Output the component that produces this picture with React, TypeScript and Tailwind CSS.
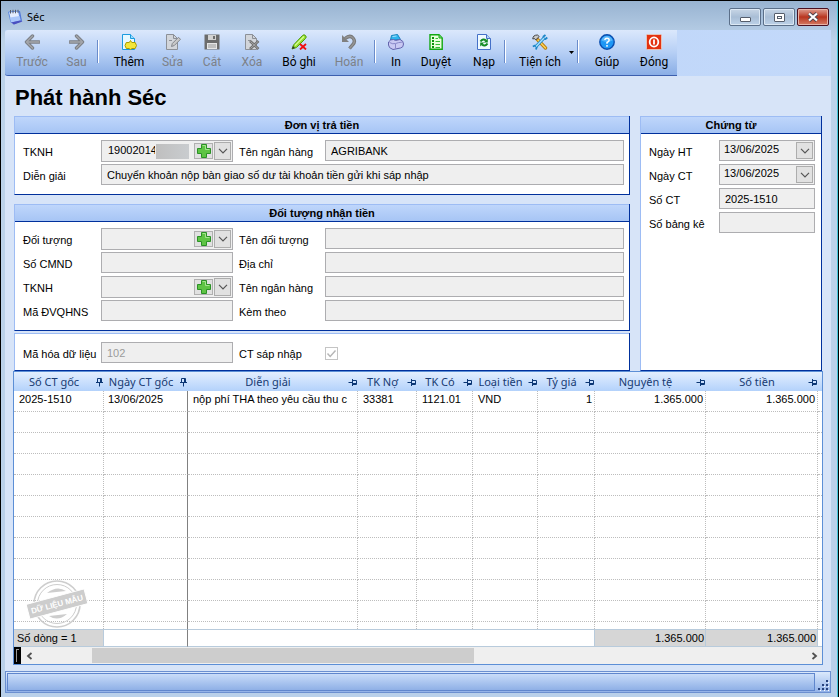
import { useId } from 'react';
import type { ReactNode } from 'react';

interface ToolItem {
  label: string;
  icon: ReactNode;
  className: string;
  disabled?: boolean;
}

interface PanelProps {
  title?: string;
  className?: string;
  children: ReactNode;
}

interface FieldProps {
  label: string;
  value?: string;
  className?: string;
  labelClassName?: string;
}

const ArrowIcon = ({ flip }: { flip?: boolean }) => (
  <svg viewBox="0 0 16 16" className={flip ? 'size-4 -scale-x-100' : 'size-4'}>
    <path d="M8.5 2 2.5 8l6 6M3 8h12" fill="none" stroke="#7b7f86" strokeWidth="3.4" strokeLinejoin="round" strokeLinecap="round" />
    <path d="M8.500 2 2.500 8l6 6M3 8h12" fill="none" stroke="#a4a6aa" strokeWidth="1.400" strokeLinejoin="round" strokeLinecap="round" />
  </svg>
);

const AddIcon = () => (
  <svg viewBox="0 0 16 16" className="size-4">
    <path d="M1.5.5h8l4 4v11h-12z" fill="#e6f8ff" stroke="#1a9be0" />
    <path d="M9.5.5v4h4" fill="#9fdcfb" stroke="#1a9be0" />
    <path d="m9.500 6.500 1.300 2h3.400l1.300 3-1.300 3h-3.400l-1.300 1.200-1.300-1.200H5.300l-1.300-3 1.300-3h3z" fill="#f3e63a" stroke="#a89b00" />
  </svg>
);

const EditIcon = () => (
  <svg viewBox="0 0 16 16" className="size-4">
    <path d="M1.5.5h7l4 4v11h-11z" fill="#d2d5da" stroke="#8c9097" />
    <path d="M8.5.5v4h4M4 6.5h3" fill="none" stroke="#8c9097" />
    <path d="m6.500 12.500.8-3L13.500 3.300l2 2-6.200 6.200z" fill="#c8c8c8" stroke="#83868c" />
  </svg>
);

const SaveIcon = () => (
  <svg viewBox="0 0 16 16" className="size-4">
    <path d="M.5.5h15v15H.5z" fill="#6c6c6c" />
    <path d="M4 1h8v5H4z" fill="#d2d2d2" />
    <path d="M9 2h2v3H9z" fill="#6c6c6c" />
    <path d="M3 9h10v6H3z" fill="#e6e6e6" />
    <path d="M4 11h8M4 13h8" stroke="#9a9a9a" />
  </svg>
);

const DeleteIcon = () => (
  <svg viewBox="0 0 16 16" className="size-4">
    <path d="M1.5.5h7l4 4v11h-11z" fill="#d2d5da" stroke="#8c9097" />
    <path d="M8.5.5v4h4M4 6.5h3" fill="none" stroke="#8c9097" />
    <path d="m6 7 8.500 8M14.500 7 6 15" stroke="#6f6f6f" strokeWidth="2.600" />
    <path d="m6.500 7.500 7.500 7M14 7.500l-7.500 7" stroke="#b5b5b5" strokeWidth=".8" />
  </svg>
);

const UnpostIcon = () => (
  <svg viewBox="0 0 16 16" className="size-4">
    <path d="M1 15 2.500 11 11.500 1.500Q13 0 14.500 1.500T14.500 4.500L5.500 13.500z" fill="#93e02c" stroke="#4f9a0c" />
    <path d="M4 11.500 13 2.500" stroke="#d8fb9a" strokeWidth="1.200" />
    <path d="M1 15l1-3 2 2z" fill="#333333" />
    <path d="m9 10 6 5.500M15 10l-6 5.500" stroke="#f01010" strokeWidth="1.800" />
  </svg>
);

const UndoIcon = () => (
  <svg viewBox="0 0 16 16" className="size-4">
    <path d="M4 4.500Q9 .5 12 4t-.5 7L8.500 14.500" fill="none" stroke="#757575" strokeWidth="3.400" />
    <path d="M4 4.500Q9 .5 12 4t-.5 7L8.500 14.500" fill="none" stroke="#949494" strokeWidth="1.600" />
    <path d="M1 1v7h7z" fill="#808080" />
  </svg>
);

const PrintIcon = () => (
  <svg viewBox="0 0 16 16" className="size-4">
    <path d="M2.500 6 3.500 1.500l6-1L12.500 5.500z" fill="#2fb4ee" stroke="#1583bd" />
    <path d="M4.500 2.500l4-.5" stroke="#a8e2fb" />
    <path d="M.5 8q2-3 5-2.500l2 1L12 5.500q3.500 1 3.500 4.500t-3 4L5 15.500Q.5 14 .5 11z" fill="#c9c9f3" stroke="#6262ac" />
    <path d="M1.500 8.500Q5 10.500 7.500 9.500T14.500 8M7.500 10v4.500" fill="none" stroke="#8888c8" />
  </svg>
);

const ReviewIcon = () => (
  <svg viewBox="0 0 16 16" className="size-4">
    <path d="M2 .8h9l3.200 3.200v11.200H2z" fill="#eaffdc" stroke="#12a812" strokeWidth="1.400" />
    <path d="M11 1v3h3" fill="#8be08b" stroke="#12a812" />
    <path d="M4 4h2M4 7h2M4 10h2M4 13h2" stroke="#0a930a" strokeWidth="2" />
    <path d="M7.500 4.500H10M7.500 7.500H12M7.500 10.500H12M7.500 13.500H12" stroke="#35bb35" />
  </svg>
);

const ReloadIcon = () => (
  <svg viewBox="0 0 16 16" className="size-4">
    <path d="M1.500.5h9l4 4v11h-13z" fill="#effaff" stroke="#4470c8" />
    <path d="M10.500.5v4h4" fill="#b6d2f7" stroke="#4470c8" />
    <path d="M4.500 7.500Q7 4 10 6.500M11.500 9.500Q9 13 6 10.500" fill="none" stroke="#118a22" strokeWidth="2" />
    <path d="M11.800 4.500v4h-4zM4.200 12.500v-4h4z" fill="#118a22" />
  </svg>
);

const ToolsIcon = () => (
  <svg viewBox="0 0 16 16" className="size-4">
    <path d="m5 5 8.500 9" stroke="#b77d0c" strokeWidth="3.400" strokeLinecap="round" />
    <path d="m6 6 7.500 8" stroke="#ffd257" strokeWidth="1.600" strokeLinecap="round" />
    <path d="M.8 5Q.8 1 5.500 1l1.700 1.500-3.500 3.500L2.500 4.500z" fill="#c9c9c9" stroke="#454545" />
    <path d="M12 4 4 12.500" stroke="#1b86c8" strokeWidth="3.200" />
    <path d="M13.500 1 11.500 2.500v2l2 .5L15.300 3.500M.8 12.500 3 11.500l1.700 1.500-.7 2.500" fill="none" stroke="#1b86c8" strokeWidth="1.800" />
    <path d="M12 4 4 12.500" stroke="#a9e1fb" strokeWidth="1.400" />
  </svg>
);

const HelpIcon = () => (
  <svg viewBox="0 0 16 16" className="size-4">
    <circle cx="8" cy="8" r="7.200" fill="#1e97f5" stroke="#0b4fb0" strokeWidth="1.400" />
    <path d="M2.500 6.500a5.600 5.600 0 0 1 11 0q-5.500 2.500-11 0" fill="#7fccff" opacity=".6" />
    <path d="M5.800 6Q6 4.200 8 4.200t2.200 1.700Q10.200 7.200 8 8.500v1.200M8 11v1.800" fill="none" stroke="#ffffff" strokeWidth="1.500" />
  </svg>
);

const CloseIcon = () => (
  <svg viewBox="0 0 16 16" className="size-4">
    <rect x=".5" y=".5" width="15" height="15" rx="1" fill="#e33210" stroke="#e8c0b4" />
    <ellipse cx="8" cy="8" rx="4.300" ry="4.600" fill="none" stroke="#ffffff" strokeWidth="1.800" />
    <path d="M8 5.500v5" stroke="#ffffff" strokeWidth="1.800" />
  </svg>
);

const ChevronIcon = () => (
  <svg viewBox="0 0 10 6" className="h-1.5 w-2.5">
    <path d="m1 .8 4 4 4-4" fill="none" stroke="#555555" strokeWidth="1.200" />
  </svg>
);

const PinIcon = ({ upright }: { upright?: boolean }) => (
  <svg viewBox="0 0 10 10" className={upright ? 'size-2.5 shrink-0' : 'size-2.5 shrink-0 rotate-90'}>
    <path d="M2 5.500h7M3.500 5V1.500h4V5M6.500 1v4M5.500 6v3.500" fill="none" stroke="#0b3674" />
  </svg>
);

const tools: (ToolItem | 'separator')[] = [
  { label: 'Trước', icon: <ArrowIcon />, className: 'w-12', disabled: true },
  { label: 'Sau', icon: <ArrowIcon flip />, className: 'w-[41px]', disabled: true },
  'separator',
  { label: 'Thêm', icon: <AddIcon />, className: 'ml-2 w-[44px]' },
  { label: 'Sửa', icon: <EditIcon />, className: 'w-[43px]', disabled: true },
  { label: 'Cắt', icon: <SaveIcon />, className: 'w-9', disabled: true },
  { label: 'Xóa', icon: <DeleteIcon />, className: 'w-11', disabled: true },
  { label: 'Bỏ ghi', icon: <UnpostIcon />, className: 'w-[50px]' },
  { label: 'Hoãn', icon: <UndoIcon />, className: 'w-[50px]', disabled: true },
  'separator',
  { label: 'In', icon: <PrintIcon />, className: 'ml-2 w-6' },
  { label: 'Duyệt', icon: <ReviewIcon />, className: 'w-14' },
  { label: 'Nạp', icon: <ReloadIcon />, className: 'w-10' },
  'separator',
  { label: 'Tiện ích', icon: <ToolsIcon />, className: 'ml-2 w-[52px]' },
];

const helpTools: (ToolItem | 'separator')[] = [
  'separator',
  { label: 'Giúp', icon: <HelpIcon />, className: 'ml-1 w-12' },
  { label: 'Đóng', icon: <CloseIcon />, className: 'w-[46px]' },
];

const columns = [
  { title: 'Số CT gốc', width: 'w-[90px]', upright: true },
  { title: 'Ngày CT gốc', width: 'w-[84px]', upright: true },
  { title: 'Diễn giải', width: '' },
  { title: 'TK Nợ', width: 'w-[59px]' },
  { title: 'TK Có', width: 'w-[56px]' },
  { title: 'Loại tiền', width: 'w-[65px]' },
  { title: 'Tỷ giá', width: 'w-[57px]' },
  { title: 'Nguyên tệ', width: 'w-[111px]' },
  { title: 'Số tiền', width: 'w-[112px]' },
];

const record = ['2025-1510', '13/06/2025', 'nộp phí THA theo yêu cầu thu c', '33381', '1121.01', 'VND', '1', '1.365.000', '1.365.000'];
const emptyRows = Array.from({ length: 10 }, (_, i) => i);

const boxStyle = 'w-full min-w-0 border border-[#adadb0] bg-[#efefef]';

function ToolButtons({ items }: { items: (ToolItem | 'separator')[] }) {
  return (
    <>
      {items.map((item, i) =>
        item === 'separator' ? (
          <div key={i} className="mt-2.5 h-[23px] w-0.5 border-l border-r border-l-[#6a8ccb] border-r-white" />
        ) : (
          <button
            key={item.label}
            disabled={item.disabled}
            className={`${item.className} flex flex-col items-center gap-1 whitespace-nowrap pt-1 leading-4 disabled:text-[#7d8188]`}
          >
            {item.icon}
            {item.label}
          </button>
        ),
      )}
    </>
  );
}

function Panel({ title, className = '', children }: PanelProps) {
  return (
    <section className={`border-b border-l border-r border-b-[#00309c] border-l-[#9dbcf4] border-r-[#00309c] bg-white ${className}`}>
      {title ? (
        <h2 className="h-[18px] border-b border-t border-b-[#00309c] border-t-[#9dbcf4] bg-linear-to-b from-[#bfd6fb] to-[#a7c5f5] text-center font-bold leading-4">
          {title}
        </h2>
      ) : (
        <div className="h-px bg-[#9dbcf4]" />
      )}
      {children}
    </section>
  );
}

function TextField({ label, value = '', className = '', labelClassName = '' }: FieldProps) {
  const id = useId();
  return (
    <>
      <label htmlFor={id} className={`whitespace-nowrap pt-1 leading-4 ${labelClassName}`}>{label}</label>
      <div className={className}>
        <input id={id} readOnly value={value} className={`${boxStyle} block h-[21px] px-[5px] outline-none`} />
      </div>
    </>
  );
}

function SelectField({ label, value = '', addable, masked }: FieldProps & { addable?: boolean; masked?: boolean }) {
  const id = useId();
  return (
    <>
      <label htmlFor={id} className="whitespace-nowrap pt-1 leading-4">{label}</label>
      <div className={`${boxStyle} flex items-center gap-px pr-px ${addable ? 'h-[22px] pl-1.5' : 'h-[21px] pl-1'}`}>
        <select id={id} defaultValue={value} className="min-w-0 flex-1 appearance-none bg-transparent pb-0.5 outline-none">
          <option>{value}</option>
        </select>
        {masked && <span className="mr-1 h-[15px] w-[33px] bg-linear-to-r from-[#bfbfbf] to-[#c9cccf]" />}
        {addable && (
          <button aria-label={`Thêm ${label}`} className="flex h-4 w-[19px] items-center justify-center border border-[#b0b0b0] bg-[#e1e1e1]">
            <svg viewBox="0 0 14 14" className="size-3.5 shrink-0">
              <path d="M4.500.5h5v4h4v5h-4v4h-5v-4h-4v-5h4z" fill="#5ec444" stroke="#2b9126" />
              <path d="M5.500 1.500h3v4h4" fill="none" stroke="#a5e58e" />
            </svg>
          </button>
        )}
        <span className={`flex w-[17px] shrink-0 items-center justify-center border border-[#adadad] bg-[#e1e1e1] ${addable ? 'h-[18px]' : 'h-[17px]'}`}>
          <ChevronIcon />
        </span>
      </div>
    </>
  );
}

function Stamp() {
  return (
    <svg viewBox="0 0 62 50" className="h-[50px] w-[62px]">
      <g fill="none" stroke="#cdcdcd">
        <circle cx="31" cy="25" r="23" strokeWidth="1.600" />
        <circle cx="31" cy="25" r="19.500" strokeWidth="1" />
      </g>
      <path d="M21 14q10-8 19-2zM23 37q9 6 18-2z" fill="#cdcdcd" />
      <g transform="rotate(-15 31 25)">
        <rect x="1" y="17.500" width="60" height="15" fill="#cdcdcd" stroke="#ffffff" />
        <text x="31" y="28" textAnchor="middle" fill="#ffffff" fontSize="8" fontWeight="bold" fontFamily="Liberation Sans, sans-serif">DỮ LIỆU MẪU</text>
      </g>
    </svg>
  );
}

function TitleBar() {
  return (
    <header className="flex h-[29px] items-start justify-between pl-1.5 pr-[9px]">
      <div className="flex items-center gap-1 pt-2 font-['Noto_Sans',sans-serif] text-[11px] leading-4">
        <svg viewBox="0 0 16 16" className="size-4">
          <path d="M2 3.500 13 2l2 10-8.500 3.500z" fill="#4f74d6" />
          <path d="M1.500 3 11.500 2l2 9.500-9.500 2z" fill="#e4edff" stroke="#5e8ae0" />
          <path d="M3 8.500 12.500 7l1 4.500-9.500 2z" fill="#a9c6fa" />
          <path d="M3.500 1v3.500M6 .8v3.500M8.500.8v3.500M11 .8v3" stroke="#555b68" />
          <path d="M4 13.500 13 11.500l2.500 1L7 15.500z" fill="#4a4fc0" />
        </svg>
        <h1>Séc</h1>
      </div>
      <div className="flex gap-0.5 pt-[7px]">
        <button aria-label="Thu nhỏ" className="flex h-[18px] w-8 items-center justify-center rounded-[2px] border border-[#5b6f89] bg-linear-to-b from-[#c8d6e6] via-[#a9bed6] to-[#bdd2e8] shadow-[inset_0_0_0_1px_#dce8f4]">
          <span className="mt-1 h-[5px] w-[11px] rounded-[1px] border border-[#555d6b] bg-white" />
        </button>
        <button aria-label="Phóng to" className="flex h-[18px] w-8 items-center justify-center rounded-[2px] border border-[#5b6f89] bg-linear-to-b from-[#c8d6e6] via-[#a9bed6] to-[#bdd2e8] shadow-[inset_0_0_0_1px_#dce8f4]">
          <span className="flex h-[9px] w-[11px] items-center justify-center rounded-[1px] border border-[#555d6b] bg-white">
            <span className="h-[3px] w-[5px] border border-[#555d6b]" />
          </span>
        </button>
        <button aria-label="Đóng cửa sổ" className="flex h-[18px] w-8 items-center justify-center rounded-[2px] border border-[#4b1020] bg-linear-to-b from-[#dc9c90] via-[#b8331d] to-[#d47a63] shadow-[inset_0_0_0_1px_#e8b3a6]">
          <svg viewBox="0 0 12 10" className="h-2.5 w-3">
            <path d="m2 1.500 8 7M10 1.500l-8 7" stroke="#4d4650" strokeWidth="4" />
            <path d="m2 1.500 8 7M10 1.500l-8 7" stroke="#ffffff" strokeWidth="2.200" />
          </svg>
        </button>
      </div>
    </header>
  );
}

function Toolbar() {
  return (
    <div className="flex h-[46px] bg-linear-to-r from-[#b8d1f8] to-[#c3d9fa] font-[Roboto,'Noto_Sans',sans-serif] text-[12px]">
      <nav className="flex rounded-l-[3px] border-b border-[#3c5fae] bg-linear-to-b from-[#dbe8fc] via-[#b6cff5] to-[#8aaee6] pl-[3px]">
        <ToolButtons items={tools} />
        <button aria-label="Thêm tiện ích" className="flex w-[11px] items-start justify-center pt-[21px]">
          <svg viewBox="0 0 5 3" className="h-[3px] w-[5px]"><path d="M0 0h5L2.500 3z" /></svg>
        </button>
        <ToolButtons items={helpTools} />
      </nav>
    </div>
  );
}

function VoucherGrid() {
  const line = 'border-b border-r border-dotted border-[#bdbdbd]';
  const edge = (i: number) => (i === 1 ? 'border-r border-r-[#808080] [border-right-style:solid]' : '');

  return (
    <div className="border border-[#5c8fd6] bg-white">
      <div className="relative">
        <table className="w-full table-fixed border-separate border-spacing-0">
          <thead>
            <tr className="h-[19px] bg-linear-to-b from-[#e3eefe] to-[#b3d2fb] font-['Noto_Sans',sans-serif] text-[11px] text-[#173a72]">
              {columns.map((column) => (
                <th key={column.title} className={`${column.width} p-0 font-normal`}>
                  <div className="flex items-center leading-4">
                    <span className="flex-1 whitespace-nowrap text-center">{column.title}</span>
                    <PinIcon upright={column.upright} />
                  </div>
                </th>
              ))}
              <th className="w-1 p-0" />
            </tr>
          </thead>
          <tbody>
            <tr className="h-[21px]">
              {record.map((value, i) => (
                <td key={i} className={`${line} ${edge(i)} overflow-hidden whitespace-nowrap py-0 pb-1 leading-4 ${i > 5 ? 'pr-0.5 text-right' : i === 1 ? 'pl-1' : 'pl-[5px]'}`}>
                  {value}
                </td>
              ))}
              <td className="border-b border-dotted border-[#bdbdbd]" />
            </tr>
            {emptyRows.map((row) => (
              <tr key={row} className="h-[21px]">
                {columns.map((column, i) => (
                  <td key={column.title} className={`${line} ${edge(i)} p-0`} />
                ))}
                <td className="border-b border-dotted border-[#bdbdbd] p-0" />
              </tr>
            ))}
            <tr className="h-[7px]">
              {columns.map((column, i) => (
                <td key={column.title} className={`border-r border-dotted border-[#bdbdbd] ${edge(i)} p-0`} />
              ))}
              <td className="p-0" />
            </tr>
          </tbody>
          <tfoot>
            <tr className="h-[18px] leading-[15px]">
              <td className="border-b border-r border-t border-[#b8cbdc] bg-[#d6d6d6] p-0 pl-[3px]">Số dòng = 1</td>
              <td className="border-b border-r border-t border-[#b8cbdc] border-r-[#808080] p-0" />
              <td colSpan={5} className="border-b border-r border-t border-[#b8cbdc] p-0" />
              <td className="border-b border-r border-t border-[#b8cbdc] bg-[#d6d6d6] p-0 pr-px text-right">1.365.000</td>
              <td className="border-b border-r border-t border-[#b8cbdc] bg-[#d6d6d6] p-0 pr-px text-right">1.365.000</td>
              <td className="border-b border-t border-[#b8cbdc] p-0" />
            </tr>
          </tfoot>
        </table>
        <div className="pointer-events-none absolute bottom-[18px] left-3">
          <Stamp />
        </div>
      </div>
      <div className="flex h-[17px] items-stretch bg-[#efefef]">
        <div className="w-[7px] border-2 border-black bg-black"><div className="h-full border-l border-t border-[#9a9a9a]" /></div>
        <button aria-label="Cuộn trái" className="flex w-4 items-center justify-center">
          <svg viewBox="0 0 7 8" className="h-2 w-[7px]"><path d="M5.500 1 2 4l3.500 3" fill="none" stroke="#505050" strokeWidth="1.800" /></svg>
        </button>
        <div className="flex flex-1 px-[55px] py-px">
          <div className="w-[58%] bg-[#cdcdcd]" />
        </div>
        <button aria-label="Cuộn phải" className="flex w-4 items-center justify-center">
          <svg viewBox="0 0 7 8" className="h-2 w-[7px]"><path d="M1.500 1 5 4 1.500 7" fill="none" stroke="#505050" strokeWidth="1.800" /></svg>
        </button>
      </div>
    </div>
  );
}

export default function App() {
  return (
    <div className="flex min-h-screen flex-col border border-black bg-linear-to-b from-[#98b3d1] via-[#bdd3ea] via-[40px] to-[#b9d0ea] font-['Liberation_Sans',Arial,sans-serif] text-[11px] text-black shadow-[inset_-1px_0_0_#43c6d8]">
      <TitleBar />

      <div className="ml-1 mr-[7px] flex flex-1 flex-col bg-[#d7e4f8]">
        <Toolbar />

        <main className="px-2">
          <h2 className="flex h-10 items-center pl-0.5 pt-1 text-[22px] font-bold leading-6">Phát hành Séc</h2>

          <div className="flex items-stretch gap-[10px] px-px">
            <div className="min-w-0 flex-1">
              <Panel title="Đơn vị trả tiền" className="mb-[9px]">
                <div className="grid auto-rows-[24px] grid-cols-[78px_132px_92px_1fr] pb-1.5 pl-2 pr-[5px] pt-1.5">
                  <SelectField label="TKNH" value="19002014" addable masked />
                  <TextField label="Tên ngân hàng" value="AGRIBANK" labelClassName="pl-1.5" />
                  <TextField label="Diễn giải" value="Chuyển khoản nộp bàn giao số dư tài khoản tiền gửi khi sáp nhập" className="col-span-3" />
                </div>
              </Panel>

              <Panel title="Đối tượng nhận tiền" className="mb-0.5">
                <div className="grid auto-rows-[24px] grid-cols-[78px_132px_92px_1fr] pb-1.5 pl-2 pr-[5px] pt-1.5">
                  <SelectField label="Đối tượng" addable />
                  <TextField label="Tên đối tượng" labelClassName="pl-1.5" />
                  <TextField label="Số CMND" />
                  <TextField label="Địa chỉ" labelClassName="pl-1.5" />
                  <SelectField label="TKNH" addable />
                  <TextField label="Tên ngân hàng" labelClassName="pl-1.5" />
                  <TextField label="Mã ĐVQHNS" />
                  <TextField label="Kèm theo" labelClassName="pl-1.5" />
                </div>
              </Panel>

              <Panel>
                <div className="flex gap-1.5 pb-[7px] pl-2 pt-2">
                  <div className="grid grid-cols-[78px_132px] [&_input]:text-[#9b9b9b]">
                    <TextField label="Mã hóa dữ liệu" value="102" />
                  </div>
                  <label htmlFor="merged" className="w-20 pt-1 leading-4">CT sáp nhập</label>
                  <span className="relative mt-[5px] size-[13px]">
                    <input id="merged" type="checkbox" defaultChecked disabled className="block size-[13px] appearance-none border border-[#c4c4c4] bg-white" />
                    <svg viewBox="0 0 13 13" className="pointer-events-none absolute inset-0 size-[13px]">
                      <path d="m2.500 6.500 2.700 3L10.500 3.500" fill="none" stroke="#b5b5b5" strokeWidth="1.400" />
                    </svg>
                  </span>
                </div>
              </Panel>
            </div>

            <Panel title="Chứng từ" className="w-[182px]">
              <div className="grid auto-rows-[24px] grid-cols-[70px_1fr] pl-2 pr-1.5 pt-1.5">
                <SelectField label="Ngày HT" value="13/06/2025" />
                <SelectField label="Ngày CT" value="13/06/2025" />
                <TextField label="Số CT" value="2025-1510" />
                <TextField label="Số bảng kê" />
              </div>
            </Panel>
          </div>

          <VoucherGrid />
        </main>

        <footer className="mt-1.5 flex h-[22px] border border-[#6b8fd0] bg-linear-to-b from-[#dbe9fc] to-[#92b2e8] p-px">
          <div className="flex-1 border border-[#5f86cd] bg-linear-to-b from-[#c9dcf9] to-[#8fb0e6]" />
          <svg viewBox="0 0 12 12" className="ml-0.5 size-3 self-end">
            <path d="M9 1h2v2H9zM5 5h2v2H5zM9 5h2v2H9zM1 9h2v2H1zM5 9h2v2H5zM9 9h2v2H9z" fill="#27427e" />
            <path d="M11 3h1v1h-1zM7 7h1v1H7zM11 7h1v1h-1zM3 11h1v1H3zM7 11h1v1H7zM11 11h1v1h-1z" fill="#ffffff" />
          </svg>
        </footer>
        <div className="h-1 bg-[#b9d0ea]" />
      </div>
    </div>
  );
}
